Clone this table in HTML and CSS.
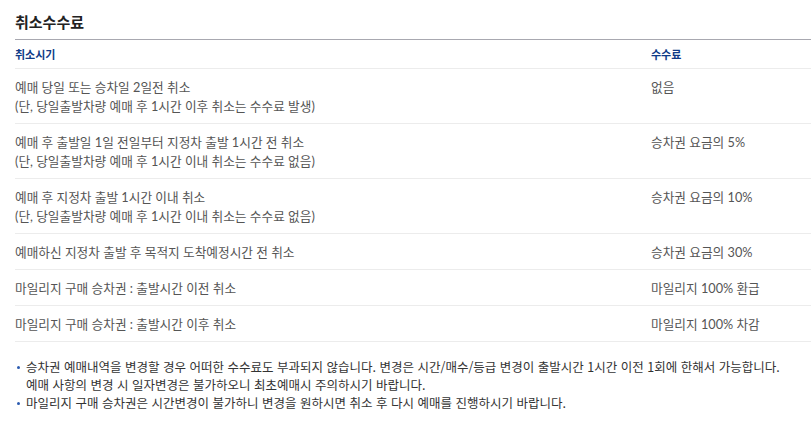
FILE: index.html
```html
<!DOCTYPE html>
<html lang="ko">
<head>
<meta charset="utf-8">
<link rel="stylesheet" href="styles.css">
</head>
<body>
<section class="fee">
  <h2 class="fee-title">취소수수료</h2>
  <table class="fee-table">
    <thead>
      <tr><th class="col-when">취소시기</th><th class="col-fee">수수료</th></tr>
    </thead>
    <tbody>
      <tr><td>예매 당일 또는 승차일 2일전 취소<br>(단, 당일출발차량 예매 후 1시간 이후 취소는 수수료 발생)</td><td>없음</td></tr>
      <tr><td>예매 후 출발일 1일 전일부터 지정차 출발 1시간 전 취소<br>(단, 당일출발차량 예매 후 1시간 이내 취소는 수수료 없음)</td><td>승차권 요금의 5%</td></tr>
      <tr><td>예매 후 지정차 출발 1시간 이내 취소<br>(단, 당일출발차량 예매 후 1시간 이내 취소는 수수료 없음)</td><td>승차권 요금의 10%</td></tr>
      <tr><td>예매하신 지정차 출발 후 목적지 도착예정시간 전 취소</td><td>승차권 요금의 30%</td></tr>
      <tr><td>마일리지 구매 승차권 : 출발시간 이전 취소</td><td>마일리지 100% 환급</td></tr>
      <tr><td>마일리지 구매 승차권 : 출발시간 이후 취소</td><td>마일리지 100% 차감</td></tr>
    </tbody>
  </table>
  <ul class="notes">
    <li>승차권 예매내역을 변경할 경우 어떠한 수수료도 부과되지 않습니다. 변경은 시간/매수/등급 변경이 출발시간 1시간 이전 1회에 한해서 가능합니다.<br>예매 사항의 변경 시 일자변경은 불가하오니 최초예매시 주의하시기 바랍니다.</li>
    <li>마일리지 구매 승차권은 시간변경이 불가하니 변경을 원하시면 취소 후 다시 예매를 진행하시기 바랍니다.</li>
  </ul>
</section>
</body>
</html>
```

FILE: styles.css
```css
html, body {
  margin: 0;
  padding: 0;
  background: #fff;
}
body {
  font-family: "Noto Sans CJK KR", "Noto Sans", sans-serif;
  color: #333;
}
.fee {
  padding: 12px 0 0 15px;
}
.fee-title {
  margin: 0;
  font-size: 15px;
  font-weight: 700;
  color: #222;
  line-height: 20px;
  padding-bottom: 7px;
  border-bottom: 1px solid #a8a8b0;
}
.fee-table {
  width: 100%;
  border-collapse: collapse;
  font-family: "Lato", "Noto Sans CJK KR", sans-serif;
}
.fee-table th {
  text-align: left;
  font-size: 11px;
  font-weight: 700;
  color: #0f3a87;
  font-family: "Noto Sans CJK KR", sans-serif;
  height: 28px;
  padding: 0;
  border-bottom: 1px solid #ececec;
}
.fee-table .col-when {
  width: 636px;
}
.fee-table td {
  font-size: 12.7px;
  line-height: 19px;
  color: #555;
  vertical-align: top;
  padding: 9px 0 7px;
  border-bottom: 1px solid #ececec;
}
.notes {
  list-style: none;
  margin: 0;
  padding: 16px 0 0 0;
  font-size: 12.5px;
  line-height: 18px;
  color: #333;
}
.notes li {
  position: relative;
  padding-left: 11px;
}
.notes li::before {
  content: "";
  position: absolute;
  left: 2px;
  top: 8px;
  width: 3px;
  height: 3px;
  border-radius: 50%;
  background: #2b5bb0;
}
```
